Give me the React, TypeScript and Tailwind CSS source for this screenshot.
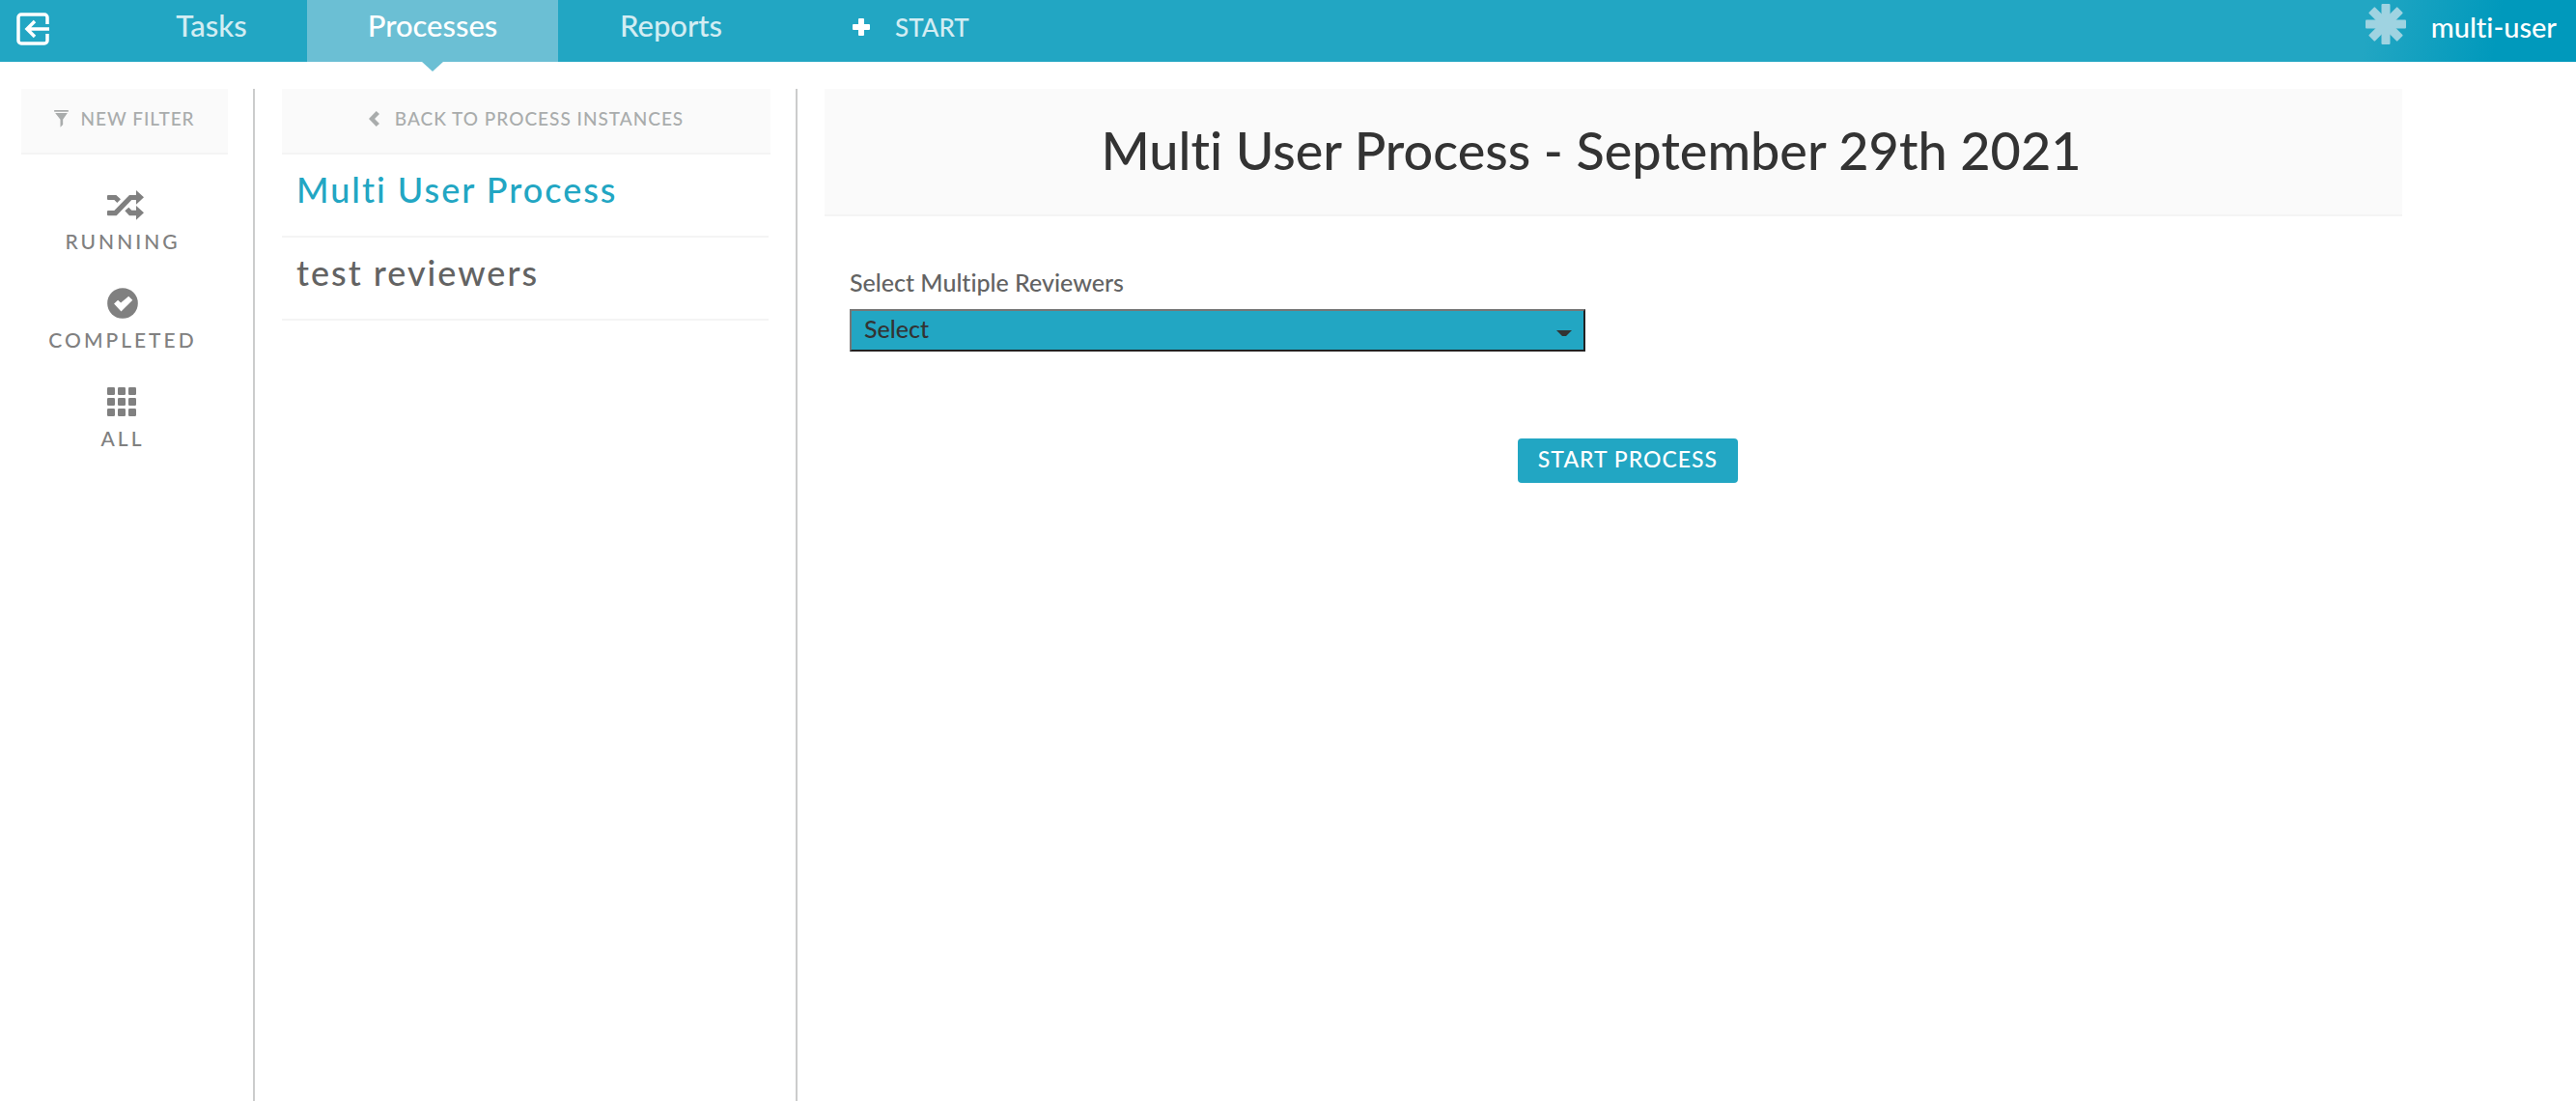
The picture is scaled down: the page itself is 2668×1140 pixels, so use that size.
import React from "react";

const navItem = "flex h-full items-center justify-center pb-3 text-[31px] leading-8";
const panelHead =
  "flex h-[68px] w-full items-center justify-center border-b-2 border-[#f4f4f4] bg-[#fafafa] pb-1 text-[19px] tracking-[1px] text-[#a9acac]";

function ExitIcon() {
  return (
    <svg viewBox="0 0 34 34" className="size-[34px]" fill="none" stroke="white" strokeWidth="3.5" aria-hidden="true">
      <path d="M32 12V5a3 3 0 0 0-3-3H5a3 3 0 0 0-3 3v24a3 3 0 0 0 3 3h24a3 3 0 0 0 3-3v-7" />
      <path d="M34 17H12M19 9l-8 8 8 8" />
    </svg>
  );
}

function AsteriskIcon() {
  return (
    <svg viewBox="-21 -21 42 42" className="size-[42px]" fill="#9fd3e1" aria-hidden="true">
      {[0, 45, 90, 135].map((a) => (
        <rect key={a} x="-4.5" y="-21" width="9" height="42" rx="1" transform={`rotate(${a})`} />
      ))}
    </svg>
  );
}

function FilterIcon() {
  return (
    <svg viewBox="0 0 44 54" className="h-[18px] w-[15px]" fill="currentColor" aria-hidden="true">
      <path d="M0 0h44v5H0zM3 9h38L27 29v16l-8 8V29z" />
    </svg>
  );
}

function ChevronIcon() {
  return (
    <svg viewBox="0 0 11 16" className="h-4 w-[11px]" fill="currentColor" aria-hidden="true">
      <path d="M0 8 7.700 0 11 3 6 8l5 5-3.300 3z" />
    </svg>
  );
}

function ShuffleIcon() {
  return (
    <svg viewBox="0 0 114 93" className="h-[31px] w-[38px]" fill="currentColor" aria-hidden="true">
      <path d="M3 15h25l14 13-11 11-9-9H3q-3 0-3-3v-9q0-3 3-3z" />
      <path d="M3 63h19L69 15h21V0l24 22-24 22V30H76L29 79H3q-3 0-3-3V66q0-3 3-3z" />
      <path d="M67 53l9 9h14V48l24 22-24 22V79H69L55 64z" />
    </svg>
  );
}

function CheckIcon() {
  return (
    <svg viewBox="0 0 95 95" className="size-8" aria-hidden="true">
      <circle cx="47.500" cy="47.500" r="47" fill="currentColor" />
      <path d="M21 49 33 38l9 8 24-20 12 12-35 35z" fill="white" />
    </svg>
  );
}

function GridIcon() {
  return (
    <svg viewBox="0 0 90 90" className="size-[30px]" fill="currentColor" aria-hidden="true">
      {[0, 33, 66].map((y) => [0, 33, 66].map((x) => <rect key={`${x}-${y}`} x={x} y={y} width="24" height="24" rx="4" />))}
    </svg>
  );
}

const filters = [
  { label: "RUNNING", icon: <ShuffleIcon /> },
  { label: "COMPLETED", icon: <CheckIcon /> },
  { label: "ALL", icon: <GridIcon /> },
];

export default function App() {
  return (
    <div className="flex min-h-screen flex-col bg-white font-['Lato',sans-serif] font-medium text-[#636363] [font-variant-ligatures:none]">
      <header className="flex h-16 items-center bg-[#22a6c3] bg-[linear-gradient(100deg,transparent_calc(100%_-_220px),#0099bc_calc(100%_-_85px))] text-white">
        <button aria-label="Exit" className="flex w-[120px] shrink-0 pb-1 pl-[17px]">
          <ExitIcon />
        </button>
        <nav className="flex h-full">
          <a href="#tasks" className={`${navItem} w-[198px] text-white/80`}>Tasks</a>
          <a href="#processes" aria-current="page" className={`${navItem} relative w-[260px] bg-[#6bbfd4]`}>
            Processes
            <svg viewBox="0 0 22 10" className="absolute top-full left-1/2 h-[10px] w-[22px] -translate-x-1/2" aria-hidden="true">
              <path d="M0 0h22L11 10z" fill="#6bbfd4" />
            </svg>
          </a>
          <a href="#reports" className={`${navItem} w-[234px] text-white/80`}>Reports</a>
        </nav>
        <button className="ml-[71px] flex items-center gap-[26px] pb-2 text-[26px] leading-8 text-white/80">
          <svg viewBox="0 0 18 18" className="size-[18px]" fill="white" aria-hidden="true">
            <path d="M6 1q0-1 1-1h4q1 0 1 1v5h5q1 0 1 1v4q0 1-1 1h-5v5q0 1-1 1H7q-1 0-1-1v-5H1q-1 0-1-1V7q0-1 1-1h5z" />
          </svg>
          <span>START</span>
        </button>
        <button className="ml-auto flex items-center gap-[26px] pr-5 pb-[14px] text-[29px] leading-8">
          <AsteriskIcon />
          <span className="pt-[6px]">multi-user</span>
        </button>
      </header>

      <div className="flex grow pt-7">
        <aside className="w-[264px] shrink-0 border-r-2 border-[#cbcccc] pr-[26px] pl-[22px]">
          <button className={`${panelHead} gap-3`}>
            <FilterIcon />
            NEW FILTER
          </button>
          <ul className="pt-9">
            {filters.map((f) => (
              <li key={f.label} className="h-[102px]">
                <button className="flex w-full flex-col text-[21px] leading-6 tracking-[3px] text-[#808080]">
                  <span className="flex h-8 items-center pl-[89px]">{f.icon}</span>
                  <span className="w-full pt-[10px] pr-1 text-center">{f.label}</span>
                </button>
              </li>
            ))}
          </ul>
        </aside>

        <section className="w-[562px] shrink-0 border-r-2 border-[#cbcccc] pr-[26px] pl-7">
          <button className={`${panelHead} gap-4`}>
            <ChevronIcon />
            BACK TO PROCESS INSTANCES
          </button>
          <ul className="pr-[2px] text-[36px] leading-10 tracking-[2px]">
            <li className="h-[86px] border-b-2 border-[#f4f4f4]">
              <button className="px-[15px] pt-4 text-[#22a6c3]">Multi User Process</button>
            </li>
            <li className="h-[86px] border-b-2 border-[#f4f4f4]">
              <button className="px-[15px] pt-4">test reviewers</button>
            </li>
          </ul>
        </section>

        <main className="grow pl-7">
          <h1 className="mr-[180px] flex h-[132px] items-center justify-center border-b-2 border-[#f4f4f4] bg-[#fafafa] pr-[46px] pb-[2px] text-[54px] leading-[64px] text-[#333]">
            Multi User Process - September 29th 2021
          </h1>
          <form className="mr-[176px] pt-[50px] pl-[26px]" onSubmit={(e) => e.preventDefault()}>
            <div className="grid grid-cols-2 gap-x-[88px]">
              <div>
                <label htmlFor="reviewers" className="block text-[25px] leading-[36px]">
                  Select Multiple Reviewers
                </label>
                <div className="relative mt-[10px]">
                  <select
                    id="reviewers"
                    className="block h-11 w-full appearance-none border-2 border-t-[#767676] border-r-[#222] border-b-[#222] border-l-[#767676] bg-[#22a6c3] pb-1 pl-[13px] text-[25px] leading-8 text-[#333]"
                  >
                    <option>Select</option>
                  </select>
                  <svg viewBox="0 0 16 6" className="pointer-events-none absolute top-[22px] right-[14px] h-[6px] w-4" aria-hidden="true">
                    <path d="M0 0h16l-6 6H6z" fill="#333" />
                  </svg>
                </div>
              </div>
            </div>
            <div className="flex justify-center pt-[90px]">
              <button className="flex h-[46px] w-[228px] items-center justify-center rounded bg-[#22a6c3] pb-1 text-[23px] tracking-[1px] text-white">
                START PROCESS
              </button>
            </div>
          </form>
        </main>
      </div>
    </div>
  );
}
